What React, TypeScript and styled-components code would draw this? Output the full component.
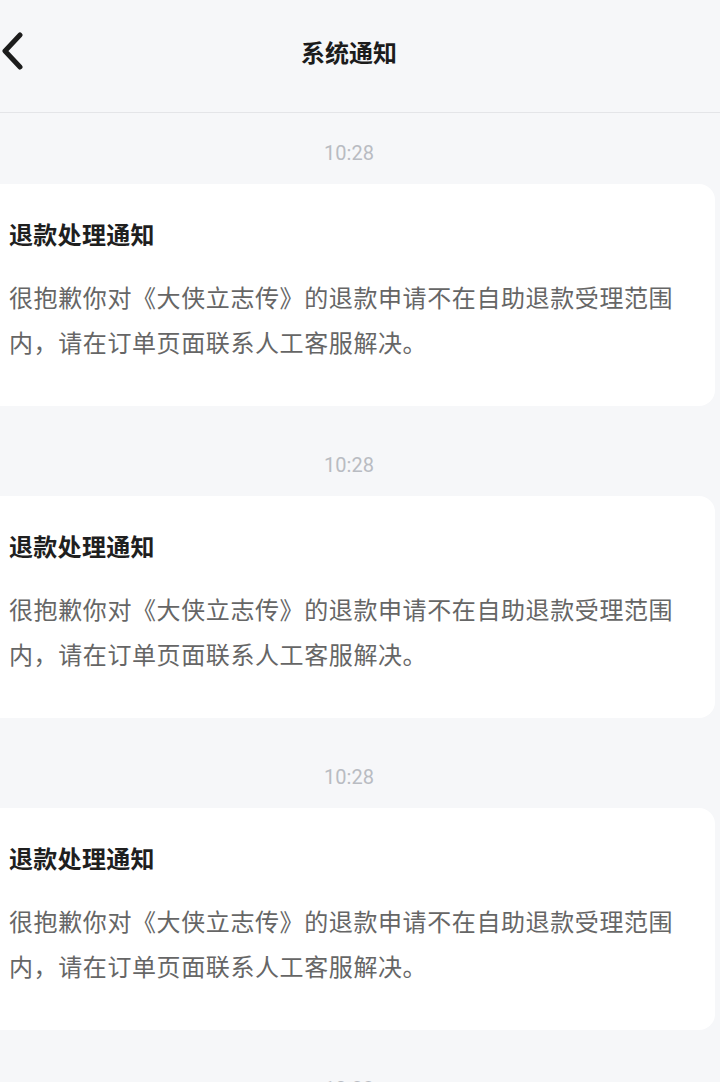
import React from "react";
import styled, { createGlobalStyle } from "styled-components";

const GlobalStyle = createGlobalStyle`
  html, body {
    margin: 0;
    padding: 0;
    background: #f6f7f9;
    overflow-x: hidden;
  }
  body {
    font-family: "Noto Sans CJK SC", "Noto Sans", Roboto, sans-serif;
  }
`;

const Page = styled.div`
  width: 742px;
  margin-left: -22px;
  min-height: 1082px;
  background: #f6f7f9;
`;

const Header = styled.header`
  height: 112px;
  display: grid;
  grid-template-columns: 80px 1fr 80px;
  align-items: center;
  border-bottom: 1px solid #e4e5e8;
  box-sizing: content-box;
`;

const BackButton = styled.button`
  border: none;
  background: none;
  padding: 0 0 10px 24px;
  display: flex;
  align-items: center;
  cursor: pointer;
`;

const Title = styled.h1`
  margin: 0 0 9px;
  text-align: center;
  font-size: 24px;
  font-weight: 700;
  color: #1c1c1c;
  line-height: 34px;
`;

const List = styled.main`
  display: flex;
  flex-direction: column;
`;

const Item = styled.section`
  display: flex;
  flex-direction: column;
`;

const Time = styled.div`
  text-align: center;
  font-family: Roboto, "Noto Sans", sans-serif;
  font-size: 20px;
  line-height: 20px;
  color: #b9bcc2;
  padding: 30px 0 21px;
`;

const Card = styled.article`
  margin: 0 5px 19px;
  background: #ffffff;
  border-radius: 16px;
  padding: 33px 26px 42px;
`;

const CardTitle = styled.h2`
  margin: 0;
  font-size: 24px;
  line-height: 34px;
  font-weight: 700;
  letter-spacing: 0.3px;
  color: #1f1f1f;
`;

const CardBody = styled.p`
  margin: 23px 0 0;
  font-size: 24px;
  line-height: 45px;
  letter-spacing: 0.6px;
  color: #666666;
`;

const notices = [1, 2, 3, 4].map((id) => ({
  id,
  time: "10:28",
  title: "退款处理通知",
  body: "很抱歉你对《大侠立志传》的退款申请不在自助退款受理范围内，请在订单页面联系人工客服解决。",
}));

const BackIcon = () => (
  <svg width="22" height="38" viewBox="0 0 22 38" fill="none">
    <polyline
      points="18,3 3,19 18,35"
      stroke="#1c1c1c"
      strokeWidth="5"
      strokeLinecap="round"
      strokeLinejoin="round"
    />
  </svg>
);

export default function App() {
  return (
    <>
      <GlobalStyle />
      <Page>
        <Header>
          <BackButton aria-label="返回">
            <BackIcon />
          </BackButton>
          <Title>系统通知</Title>
          <span />
        </Header>
        <List>
          {notices.map((n) => (
            <Item key={n.id}>
              <Time>{n.time}</Time>
              <Card>
                <CardTitle>{n.title}</CardTitle>
                <CardBody>{n.body}</CardBody>
              </Card>
            </Item>
          ))}
        </List>
      </Page>
    </>
  );
}
